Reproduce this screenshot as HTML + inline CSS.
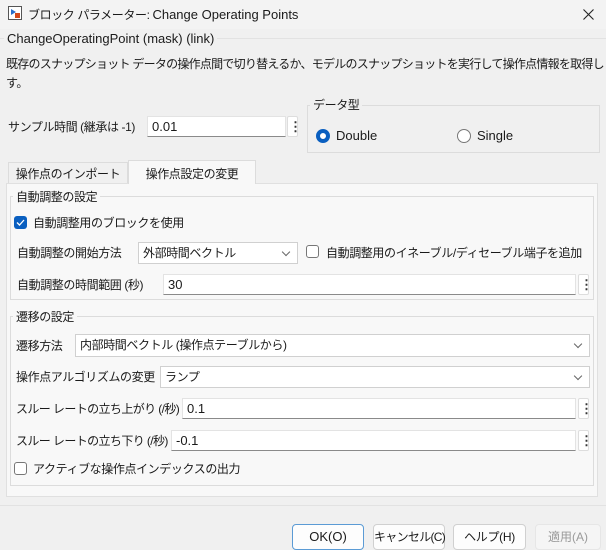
<!DOCTYPE html>
<html><head><meta charset="utf-8"><style>
*{box-sizing:border-box;margin:0;padding:0}
body{width:606px;height:547px;overflow:hidden;background:#f0f0f0;font-family:"Liberation Sans","Noto Sans CJK JP",sans-serif;font-size:12px;letter-spacing:-0.4px;line-height:16px;color:#1a1a1a;position:relative}
.a{position:absolute;white-space:nowrap}
.l{font-size:13px;letter-spacing:0}
.inp{position:absolute;background:#fff;border:1px solid #e3e3e3;border-bottom:1px solid #8a8a8a;padding-left:4px;line-height:19px;font-size:13px;letter-spacing:0}
.sel{position:absolute;background:#fff;border:1px solid #d0d0d0;padding-left:4px;line-height:20px;white-space:nowrap}
.sel:after{content:"";position:absolute;right:8px;top:6px;width:5px;height:5px;border-right:1px solid #666;border-bottom:1px solid #666;transform:rotate(45deg)}
.dots{position:absolute;width:11px;height:21px;background:#fff;border:1px solid #ddd;border-radius:2px}
.dots:before{content:"⋮";position:absolute;left:1px;top:1px;font-weight:bold;font-size:13px;line-height:17px;color:#333}
.grp{position:absolute;border:1px solid #dcdcdc}
.lg{position:absolute;background:#f0f0f0;padding:0 3px;white-space:nowrap}
.cb{position:absolute;width:13px;height:13px;border:1px solid #777;border-radius:3px;background:#fff}
.btn{position:absolute;top:524px;height:26px;background:#fdfdfd;border:1px solid #d0d0d0;border-radius:4px;text-align:center;line-height:24px;white-space:nowrap;font-size:13px;letter-spacing:0}
</style></head><body>
<div class="a" style="left:0;top:0;width:606px;height:29px;background:#f3f3f3"></div>
<svg class="a" style="left:8px;top:6px" width="14" height="14"><rect x="0.5" y="0.5" width="13" height="13" fill="#fff" stroke="#555"/><path d="M3 3 L8 6 L3 9Z" fill="#2a6fc9"/><rect x="7" y="7" width="5" height="5" fill="#d2481b"/></svg>
<div class="a" style="left:28px;top:7px">ブロック パラメーター: <span class="l">Change Operating Points</span></div>
<svg class="a" style="left:583px;top:9px" width="11" height="11"><path d="M0.5 0.5L10.5 10.5M10.5 0.5L0.5 10.5" stroke="#222" stroke-width="1.1"/></svg>
<div class="a" style="left:0;top:38px;width:606px;border-top:1px solid #e2e2e2"></div>
<div class="lg l" style="left:4px;top:31px">ChangeOperatingPoint (mask) (link)</div>
<div class="a" style="left:6px;top:56px;letter-spacing:-0.75px">既存のスナップショット データの操作点間で切り替えるか、モデルのスナップショットを実行して操作点情報を取得しま</div>
<div class="a" style="left:6px;top:75px">す。</div>
<div class="a" style="left:8px;top:119px">サンプル時間 (継承は -1)</div>
<div class="inp" style="left:147px;top:116px;width:139px;height:21px">0.01</div>
<div class="dots" style="left:287px;top:116px"></div>
<div class="grp" style="left:307px;top:105px;width:293px;height:48px"></div>
<div class="lg" style="left:310px;top:97px">データ型</div>
<div class="a" style="left:316px;top:129px;width:14px;height:14px;border-radius:50%;border:4px solid #0a5fc0;background:#fff"></div>
<div class="a l" style="left:336px;top:128px">Double</div>
<div class="a" style="left:457px;top:129px;width:14px;height:14px;border-radius:50%;border:1px solid #777;background:#fff"></div>
<div class="a l" style="left:477px;top:128px">Single</div>
<div class="a" style="left:6px;top:183px;width:592px;height:314px;background:#f8f8f8;border:1px solid #e0e0e0"></div>
<div class="a" style="left:8px;top:162px;width:120px;height:21px;border:1px solid #dcdcdc;border-bottom:none;background:#f0f0f0;text-align:center;line-height:22px">操作点のインポート</div>
<div class="a" style="left:128px;top:160px;width:128px;height:24px;border:1px solid #dcdcdc;border-bottom:none;background:#f8f8f8;text-align:center;line-height:26px">操作点設定の変更</div>
<div class="grp" style="left:10px;top:196px;width:584px;height:104px"></div>
<div class="lg" style="left:13px;top:189px;background:#f8f8f8">自動調整の設定</div>
<div class="a" style="left:14px;top:216px;width:13px;height:13px;border-radius:3px;background:#0a5fc0"><svg width="13" height="13" style="position:absolute;left:0;top:0"><path d="M3 6.5L5.5 9L10 4" stroke="#fff" stroke-width="1.3" fill="none"/></svg></div>
<div class="a" style="left:33px;top:215px">自動調整用のブロックを使用</div>
<div class="a" style="left:17px;top:245px">自動調整の開始方法</div>
<div class="sel" style="left:138px;top:242px;width:160px;height:22px">外部時間ベクトル</div>
<div class="cb" style="left:306px;top:245px"></div>
<div class="a" style="left:326px;top:245px">自動調整用のイネーブル/ディセーブル端子を追加</div>
<div class="a" style="left:17px;top:277px">自動調整の時間範囲 (秒)</div>
<div class="inp" style="left:163px;top:274px;width:413px;height:21px">30</div>
<div class="dots" style="left:578px;top:274px"></div>
<div class="grp" style="left:10px;top:316px;width:584px;height:170px"></div>
<div class="lg" style="left:13px;top:309px;background:#f8f8f8">遷移の設定</div>
<div class="a" style="left:16px;top:338px">遷移方法</div>
<div class="sel" style="left:75px;top:334px;width:515px;height:23px">内部時間ベクトル (操作点テーブルから)</div>
<div class="a" style="left:16px;top:369px">操作点アルゴリズムの変更</div>
<div class="sel" style="left:160px;top:366px;width:430px;height:22px">ランプ</div>
<div class="a" style="left:16px;top:401px;letter-spacing:-0.6px">スルー レートの立ち上がり (/秒)</div>
<div class="inp" style="left:182px;top:398px;width:394px;height:21px">0.1</div>
<div class="dots" style="left:578px;top:398px"></div>
<div class="a" style="left:16px;top:433px;letter-spacing:-0.6px">スルー レートの立ち下り (/秒)</div>
<div class="inp" style="left:171px;top:430px;width:405px;height:21px">-0.1</div>
<div class="dots" style="left:578px;top:430px"></div>
<div class="cb" style="left:14px;top:462px"></div>
<div class="a" style="left:33px;top:461px">アクティブな操作点インデックスの出力</div>
<div class="a" style="left:0;top:505px;width:606px;border-top:1px solid #e2e2e2"></div>
<div class="btn" style="left:292px;width:72px;border-color:#5b9bd5">OK(O)</div>
<div class="btn" style="left:373px;width:72px;font-size:12px;letter-spacing:-0.7px">キャンセル(C)</div>
<div class="btn" style="left:453px;width:73px;font-size:12px;letter-spacing:-0.3px">ヘルプ(H)</div>
<div class="btn" style="left:535px;width:66px;background:#f5f5f5;border-color:#e6e6e6;color:#9a9a9a;font-size:12px">適用(A)</div>
</body></html>
